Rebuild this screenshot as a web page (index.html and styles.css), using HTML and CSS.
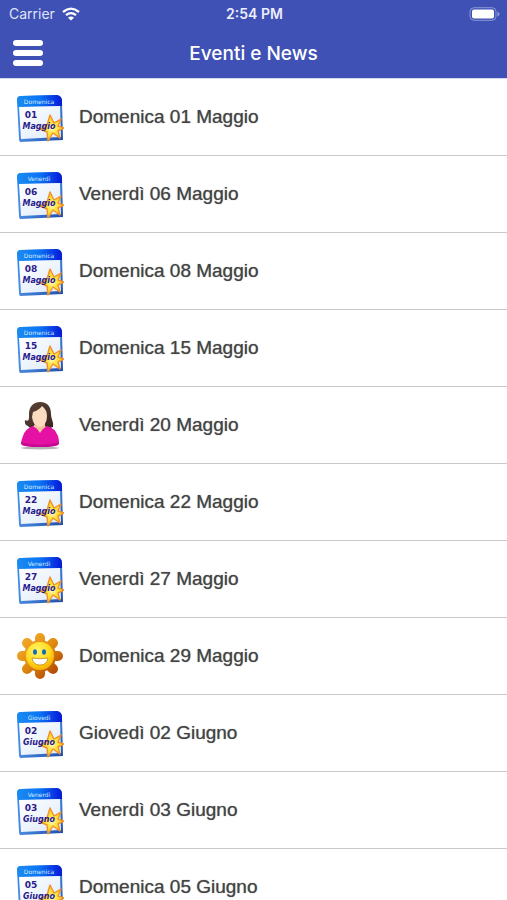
FILE: index.html
```html
<!DOCTYPE html>
<html lang="it">
<head>
    <meta charset="UTF-8">
    <meta name="viewport" content="width=device-width, initial-scale=1.0">
    <title>Eventi e News</title>
    <link rel="stylesheet" href="styles.css">
</head>
<body>
    <!-- Shared calendar page and star -->
    <svg class="defs" width="0" height="0" aria-hidden="true">
        <defs>
            <linearGradient id="frame" x1="0" y1="0" x2="1" y2="1">
                <stop offset="0" stop-color="#2f8be8"/>
                <stop offset="0.5" stop-color="#4a8be0"/>
                <stop offset="1" stop-color="#1c4aa8"/>
            </linearGradient>
            <linearGradient id="band" x1="0" y1="0" x2="1" y2="0">
                <stop offset="0" stop-color="#1b8cf0"/>
                <stop offset="0.5" stop-color="#0a74f4"/>
                <stop offset="1" stop-color="#0618d8"/>
            </linearGradient>
            <linearGradient id="paper" x1="0" y1="0" x2="1" y2="1">
                <stop offset="0" stop-color="#ffffff"/>
                <stop offset="1" stop-color="#dceafa"/>
            </linearGradient>
            <radialGradient id="star">
                <stop offset="0" stop-color="#fffbd0"/>
                <stop offset="0.45" stop-color="#ffe23c"/>
                <stop offset="1" stop-color="#ffc928"/>
            </radialGradient>
            <radialGradient id="face" cx="0.4" cy="0.3" r="0.75">
                <stop offset="0" stop-color="#fff56a"/>
                <stop offset="0.6" stop-color="#ffd91c"/>
                <stop offset="1" stop-color="#f5a800"/>
            </radialGradient>
            <linearGradient id="petals" gradientUnits="userSpaceOnUse" x1="6" y1="6" x2="40" y2="44">
                <stop offset="0" stop-color="#f4ac2c"/>
                <stop offset="0.5" stop-color="#e08a10"/>
                <stop offset="1" stop-color="#b04404"/>
            </linearGradient>
            <linearGradient id="hair" x1="0" y1="0" x2="1" y2="1">
                <stop offset="0" stop-color="#5c4438"/>
                <stop offset="1" stop-color="#3a2620"/>
            </linearGradient>
            <symbol id="calendar" viewBox="0 0 48 50">
                <path d="M1 8Q1 4 5 4L41 3Q46 4 46 9L47 48L4 50Q3 49 3 47Z" fill="url(#frame)"/>
                <path d="M1 8Q1 4 5 4L41 3Q46 4 46 9V14L2 15Z" fill="url(#band)"/>
                <path d="M3 15L44 14L45 45L5 47Z" fill="url(#paper)"/>
            </symbol>
            <symbol id="burst" viewBox="0 0 48 50">
                <path d="M34 23L38 31L45 27L42 34L48 36L42 39L44 46L37 41L32 49L31 40L24 37L31 33Z" fill="url(#star)" stroke="#f0922c" stroke-width="1.4" stroke-linejoin="round"/>
            </symbol>
        </defs>
    </svg>

    <header class="top">
        <div class="status-bar">
            <div class="carrier">
                <span>Carrier</span>
                <svg width="18" height="14" viewBox="0 0 18 14" aria-hidden="true">
                    <g fill="none" stroke="#fff" stroke-width="2.3">
                        <path d="M1 5Q9-1.8 17 5"/>
                        <path d="M4 8.2Q9 4 14 8.2"/>
                    </g>
                    <path d="M9 13.6L6 10.7Q9 8.4 12 10.7Z" fill="#fff"/>
                </svg>
            </div>
            <span class="clock">2:54 PM</span>
            <div class="battery">
                <svg width="31" height="14" viewBox="0 0 31 14" aria-hidden="true">
                    <rect x="1" y="0.7" width="26" height="12.6" rx="4" fill="none" stroke="#8d98d6"/>
                    <rect x="3" y="2.6" width="22" height="8.8" rx="2" fill="#fff"/>
                    <path d="M28.4 4.5Q30.6 5.5 30.6 7T28.4 9.5Z" fill="#8d98d6"/>
                </svg>
            </div>
        </div>
        <div class="nav-bar">
            <button class="menu-button" type="button" aria-label="Menu">
                <span></span>
                <span></span>
                <span></span>
            </button>
            <h1>Eventi e News</h1>
        </div>
    </header>

    <main class="event-list" id="eventList"></main>

    <script>
        const events = [
            { day: 'Domenica', date: '01', month: 'Maggio' },
            { day: 'Venerdì', date: '06', month: 'Maggio' },
            { day: 'Domenica', date: '08', month: 'Maggio' },
            { day: 'Domenica', date: '15', month: 'Maggio' },
            { day: 'Venerdì', date: '20', month: 'Maggio', icon: 'woman' },
            { day: 'Domenica', date: '22', month: 'Maggio' },
            { day: 'Venerdì', date: '27', month: 'Maggio' },
            { day: 'Domenica', date: '29', month: 'Maggio', icon: 'sun' },
            { day: 'Giovedì', date: '02', month: 'Giugno' },
            { day: 'Venerdì', date: '03', month: 'Giugno' },
            { day: 'Domenica', date: '05', month: 'Giugno' }
        ];

        const icons = {
            calendar: (e) => `
                <use href="#calendar"/>
                <text class="cal-day" x="23" y="12">${e.day}</text>
                <use href="#burst"/>
                <text class="cal-date" x="15" y="26">${e.date}</text>
                <text class="cal-month" x="23" y="37">${e.month}</text>`,
            woman: () => `
                <ellipse cx="24" cy="48" rx="19" ry="1.5" fill="#b5b5b5"/>
                <path d="M13 14C13 6 18 2 24 2C32 2 35 7 35 14C35 19 38 22 37 27Q31 30 28 25H19Q14 30 12 26Q8 25 9 20Q13 22 13 18Z" fill="url(#hair)"/>
                <path d="M19 22H29V30L24 35L18 30Z" fill="#f0c49c"/>
                <path d="M17 12Q23 10 26 6Q31 10 31 16Q31 25 24 27Q17 26 16 17Z" fill="#fbdcc0"/>
                <path d="M17 26Q21 28 24 33Q27 28 31 26Q39 28 42 36Q44 43 42 45Q38 47 24 47T6 45Q4 43 7 36Q9 29 17 26Z" fill="#e411a4"/>
                <path d="M5 42Q24 48 43 42Q43 44 42 45Q36 47 24 47T6 45Q5 44 5 42Z" fill="#c60890"/>`,
            sun: () => `
                <g fill="none" stroke="url(#petals)" stroke-width="10" stroke-linecap="round">
                    <path d="M24.01 7L24 43M6 25.01L42 25M11 12L37 38M37 12L11 38"/>
                </g>
                <circle cx="24" cy="25" r="16" fill="url(#petals)"/>
                <circle cx="24" cy="25" r="14" fill="url(#face)"/>
                <ellipse cx="19" cy="21" rx="2" ry="2.8" fill="#146cb4"/>
                <ellipse cx="28" cy="21" rx="2" ry="2.8" fill="#146cb4"/>
                <path d="M16 27Q24 28.5 32 27Q31 34 24 34T16 27Z" fill="#fff" stroke="#c07a08" stroke-width="0.7"/>`
        };

        document.getElementById('eventList').innerHTML = events.map((e) => `
            <a class="event" href="#${e.date}-${e.month.toLowerCase()}">
                <svg class="event-icon" viewBox="0 0 48 50" aria-hidden="true">${icons[e.icon || 'calendar'](e)}</svg>
                <span>${e.day} ${e.date} ${e.month}</span>
            </a>`).join('');
    </script>
</body>
</html>
```
FILE: styles.css
```css
* {
    margin: 0;
    padding: 0;
    box-sizing: border-box;
}

body {
    font-family: "Liberation Sans", Arial, sans-serif;
    background: #fff;
    color: #444;
    height: 100vh;
    display: flex;
    flex-direction: column;
}

.defs {
    position: absolute;
}

.top {
    background: #3f51b5;
    color: #fff;
    flex-shrink: 0;
    border-bottom: 1px solid #d4d8ee;
}

.status-bar {
    display: grid;
    grid-template-columns: 1fr auto 1fr;
    align-items: center;
    height: 27px;
    padding: 0 7px 0 9px;
    font-family: Inter, sans-serif;
    font-size: 14px;
}

.carrier {
    display: flex;
    align-items: center;
    gap: 7px;
    color: #dfe3f8;
}

.clock {
    font-weight: 600;
    color: #eceefb;
}

.battery {
    display: flex;
    justify-content: flex-end;
}

.nav-bar {
    display: grid;
    grid-template-columns: 1fr auto 1fr;
    align-items: center;
    height: 51px;
    padding: 0 13px;
}

.menu-button {
    width: 30px;
    display: flex;
    flex-direction: column;
    gap: 4px;
    background: none;
    border: none;
    cursor: pointer;
}

.menu-button span {
    width: 100%;
    height: 6px;
    border-radius: 3px;
    background: #fff;
}

.nav-bar h1 {
    padding-top: 2px;
    font-family: Inter, sans-serif;
    font-size: 19px;
    font-weight: 500;
}

.event-list {
    flex: 1;
    min-height: 0;
    overflow-y: auto;
    scrollbar-width: none;
}

.event {
    display: flex;
    align-items: center;
    gap: 15px;
    height: 77px;
    padding: 0 16px;
    border-bottom: 1px solid #c8c8c8;
    color: #444;
    font-size: 19px;
    text-decoration: none;
    text-shadow: 0 0 1px #777;
}

.event-icon {
    width: 48px;
    height: 50px;
    flex-shrink: 0;
    text-shadow: none;
}

.event-icon text {
    font-family: "DejaVu Sans", sans-serif;
    text-anchor: middle;
}

.cal-day {
    font-size: 6px;
    fill: #d4ecff;
}

.cal-date {
    font-size: 9px;
    font-weight: 700;
    fill: #2a1a8c;
}

.cal-month {
    font-size: 8px;
    font-weight: 700;
    font-style: italic;
    fill: #2a1a8c;
}
```
